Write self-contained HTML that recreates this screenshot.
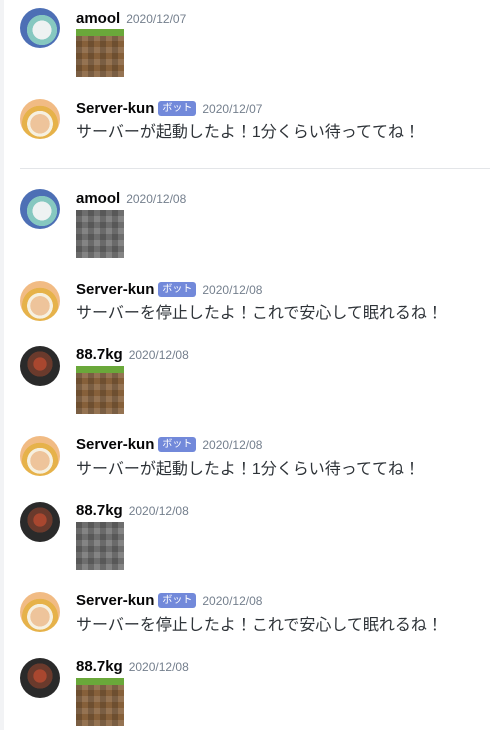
<!DOCTYPE html>
<html><head><meta charset="utf-8"><style>
body{margin:0;width:490px;height:730px;background:#fff;position:relative;overflow:hidden;font-family:"Liberation Sans","Noto Sans CJK JP",sans-serif}
.strip{position:absolute;left:0;top:0;width:4px;height:730px;background:#f2f3f5}
.av{position:absolute;left:20px;width:40px;height:40px;border-radius:50%;overflow:hidden}
.amool{background:radial-gradient(circle at 55% 55%,#eef2f2 0 30%,#86c8c0 31% 48%,#4d6fb5 49%)}
.srv{background:radial-gradient(circle at 50% 62%,#eec49b 0 30%,#f6f0e0 31% 40%,#e6b24a 41% 56%,#f1bb84 57%)}
.kg{background:radial-gradient(circle at 50% 45%,#a9472f 0 22%,#6a3a2c 23% 42%,#2a2a2a 43%)}
.name{position:absolute;left:76px;font-weight:bold;font-size:15px;color:#060607;white-space:nowrap}
.date{font-weight:normal;font-size:12px;color:#747f8d;margin-left:6px}
.bot{display:inline-block;background:#7289da;color:#fff;font-size:10px;font-weight:normal;padding:0 4px;height:15px;line-height:15px;border-radius:3px;margin-left:4px;vertical-align:2px}
.msg{position:absolute;left:76px;font-size:16px;color:#2e3338;white-space:nowrap}
.grass{position:absolute;left:76px;width:48px;height:48px;background:
linear-gradient(#6aa83a 0,#6aa83a 7px,transparent 7px,transparent),
repeating-linear-gradient(90deg,rgba(0,0,0,.18) 0 6px,transparent 6px 12px),
repeating-linear-gradient(0deg,rgba(255,255,255,.12) 0 6px,transparent 6px 12px),
#86603a}
.stone{position:absolute;left:76px;width:48px;height:48px;background:
repeating-linear-gradient(90deg,rgba(0,0,0,.2) 0 6px,transparent 6px 12px),
repeating-linear-gradient(0deg,rgba(255,255,255,.15) 0 6px,transparent 6px 12px),
#6e6e6e}
.sep{position:absolute;left:20px;right:0;top:168px;height:1px;background:#e3e5e8}
</style></head><body>
<div class="strip"></div>

<div class="av amool" style="top:8px"></div>
<div class="name" style="top:10px">amool<span class="date">2020/12/07</span></div>
<div class="grass" style="top:29px"></div>

<div class="av srv" style="top:99px"></div>
<div class="name" style="top:100px">Server-kun<span class="bot">ボット</span><span class="date">2020/12/07</span></div>
<div class="msg" style="top:118px">サーバーが起動したよ！1分くらい待っててね！</div>

<div class="sep"></div>

<div class="av amool" style="top:189px"></div>
<div class="name" style="top:190px">amool<span class="date">2020/12/08</span></div>
<div class="stone" style="top:210px"></div>

<div class="av srv" style="top:281px"></div>
<div class="name" style="top:281px">Server-kun<span class="bot">ボット</span><span class="date">2020/12/08</span></div>
<div class="msg" style="top:299px">サーバーを停止したよ！これで安心して眠れるね！</div>

<div class="av kg" style="top:346px"></div>
<div class="name" style="top:346px">88.7kg<span class="date">2020/12/08</span></div>
<div class="grass" style="top:366px"></div>

<div class="av srv" style="top:436px"></div>
<div class="name" style="top:436px">Server-kun<span class="bot">ボット</span><span class="date">2020/12/08</span></div>
<div class="msg" style="top:455px">サーバーが起動したよ！1分くらい待っててね！</div>

<div class="av kg" style="top:502px"></div>
<div class="name" style="top:502px">88.7kg<span class="date">2020/12/08</span></div>
<div class="stone" style="top:522px"></div>

<div class="av srv" style="top:592px"></div>
<div class="name" style="top:592px">Server-kun<span class="bot">ボット</span><span class="date">2020/12/08</span></div>
<div class="msg" style="top:611px">サーバーを停止したよ！これで安心して眠れるね！</div>

<div class="av kg" style="top:658px"></div>
<div class="name" style="top:658px">88.7kg<span class="date">2020/12/08</span></div>
<div class="grass" style="top:678px"></div>
</body></html>
